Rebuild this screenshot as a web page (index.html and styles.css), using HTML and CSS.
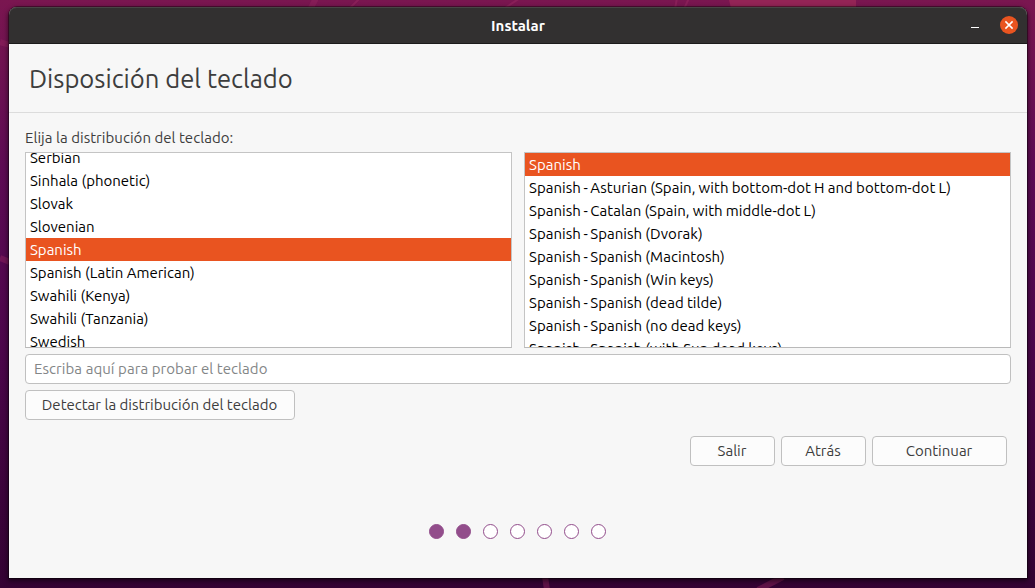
FILE: index.html
```html
<!DOCTYPE html>
<html lang="es">
<head>
<meta charset="utf-8">
<title>Instalar</title>
<link rel="stylesheet" href="styles.css">
</head>
<body>
<svg class="wallpaper" viewBox="0 0 1035 588" aria-hidden="true">
  <path class="shape" d="M729 0H856V12H732Z"/>
  <path class="ray" d="M350 8L360 -2M505 8L520 -2M675 9L677 -2M684 9L689 -2"/>
  <path class="ray wide" d="M311 8L316 -2M545 576L547 590M758 590L783 577M0 42L10 45M0 258L10 262"/>
</svg>
<main class="window">
  <header class="titlebar">
    <span class="caption">Instalar</span>
    <div class="controls">
      <span class="minimize"></span>
      <svg class="close" viewBox="0 0 18 18"><circle cx="9" cy="9" r="9"/><path d="M5.4 5.4L12.6 12.6M12.6 5.4L5.4 12.6"/></svg>
    </div>
  </header>
  <div class="heading"><h1>Disposición del teclado</h1></div>
  <section class="content">
    <label class="prompt">Elija la distribución del teclado:</label>
    <div class="lists">
      <div class="list"><ul class="scrolled">
        <li>Serbian</li><li>Sinhala (phonetic)</li><li>Slovak</li><li>Slovenian</li><li class="selected">Spanish</li><li>Spanish (Latin American)</li><li>Swahili (Kenya)</li><li>Swahili (Tanzania)</li><li>Swedish</li>
      </ul></div>
      <div class="list"><ul class="variants">
        <li class="selected">Spanish</li><li>Spanish<span class="dash"> - </span>Asturian (Spain, with bottom-dot H and bottom-dot L)</li><li>Spanish<span class="dash"> - </span>Catalan (Spain, with middle-dot L)</li><li>Spanish<span class="dash"> - </span>Spanish (Dvorak)</li><li>Spanish<span class="dash"> - </span>Spanish (Macintosh)</li><li>Spanish<span class="dash"> - </span>Spanish (Win keys)</li><li>Spanish<span class="dash"> - </span>Spanish (dead tilde)</li><li>Spanish<span class="dash"> - </span>Spanish (no dead keys)</li><li>Spanish<span class="dash"> - </span>Spanish (with Sun dead keys)</li>
      </ul></div>
    </div>
    <input class="tester" placeholder="Escriba aquí para probar el teclado">
    <button class="detect">Detectar la distribución del teclado</button>
    <div class="actions"><button>Salir</button><button>Atrás</button><button class="next">Continuar</button></div>
    <div class="steps"><i class="done"></i><i class="done"></i><i></i><i></i><i></i><i></i><i></i></div>
  </section>
</main>
</body>
</html>
```

FILE: styles.css
```css
* { box-sizing: border-box; }
body {
  margin: 0;
  height: 588px;
  overflow: hidden;
  padding: 7px 8px 10px 9px;
  background: linear-gradient(#7a1650 0, #701351 60px, #5d0b54 170px, #4c064b 350px, #3b043a 500px, #340333 588px);
  font: 15px/23px Ubuntu, "Noto Sans", sans-serif;
  color: #3d3d3d;
}
.wallpaper { position: absolute; left: 0; top: 0; width: 1035px; height: 588px; }
.shape { fill: #942456; }
.ray { stroke: #94265f; stroke-width: 2; fill: none; opacity: .6; }
.wide { stroke-width: 6; opacity: .45; }
.window {
  position: relative;
  height: 571px;
  background: #f7f7f7;
  border-radius: 8px 8px 0 0;
  box-shadow: 0 0 0 1px rgba(0,0,0,.35), 0 2px 5px 1px rgba(0,0,0,.55);
}
.titlebar {
  height: 37px;
  display: grid;
  grid-template-columns: 1fr auto 1fr;
  align-items: center;
  background: #323030;
  border-radius: 8px 8px 0 0;
  border-bottom: 1px solid #1c1b1b;
  box-shadow: inset 0 1px #484545;
  color: #fff;
}
.caption { grid-column: 2; font-weight: 700; padding-top: 1px; }
.controls { display: flex; justify-content: flex-end; align-items: center; gap: 21px; padding-right: 9px; }
.minimize { width: 8px; height: 1px; background: #fff; margin-top: 4px; }
.close { width: 18px; height: 18px; fill: #e95420; stroke: none; }
.close path { stroke: #fff; stroke-width: 1.5; }
.heading { height: 69px; border-bottom: 1px solid #dcdcdc; padding: 18px 20px; }
h1 { margin: 0; font-size: 25.6px; line-height: 34px; font-weight: 400; }
.content { padding: 14px 16px 0; }
.prompt { display: block; height: 25px; line-height: 22px; letter-spacing: .03px; }
.lists { display: grid; grid-template-columns: 487px 487px; gap: 12px; height: 196px; }
.list { height: 196px; border: 1px solid #c4c4c4; border-bottom-color: #b9b9b9; overflow: hidden; background: #fff; color: #000; }
ul { list-style: none; margin: 0; padding: 0; }
.scrolled { margin-top: -7px; }
.variants { letter-spacing: .04px; word-spacing: -.3px; }
.dash { word-spacing: -1px; }
li { height: 23px; line-height: 24px; padding: 0 4px; white-space: nowrap; }
.selected { background: #e95420; color: #fff; }
.tester, button { font: inherit; border: 1px solid #c0c0c0; border-radius: 4px; display: block; height: 30px; }
.tester { width: 100%; margin: 6px 0; padding: 0 8px 2px; background: #fff; letter-spacing: .06px; }
.tester::placeholder { color: #838687; opacity: 1; }
button { background: #fcfcfc; color: #3d3d3d; padding: 0 1px 2px 0; width: 85px; white-space: nowrap; }
.detect { width: 270px; }
.actions { display: flex; justify-content: flex-end; gap: 6px; margin-top: 16px; padding-right: 4px; }
.next { width: 135px; }
.steps { display: flex; justify-content: center; gap: 12px; margin-top: 58px; padding-right: 2px; }
.steps i { width: 15px; height: 15px; border: 1px solid #924d8b; border-radius: 50%; background: #fff; }
.steps .done { background: #924d8b; }
```
